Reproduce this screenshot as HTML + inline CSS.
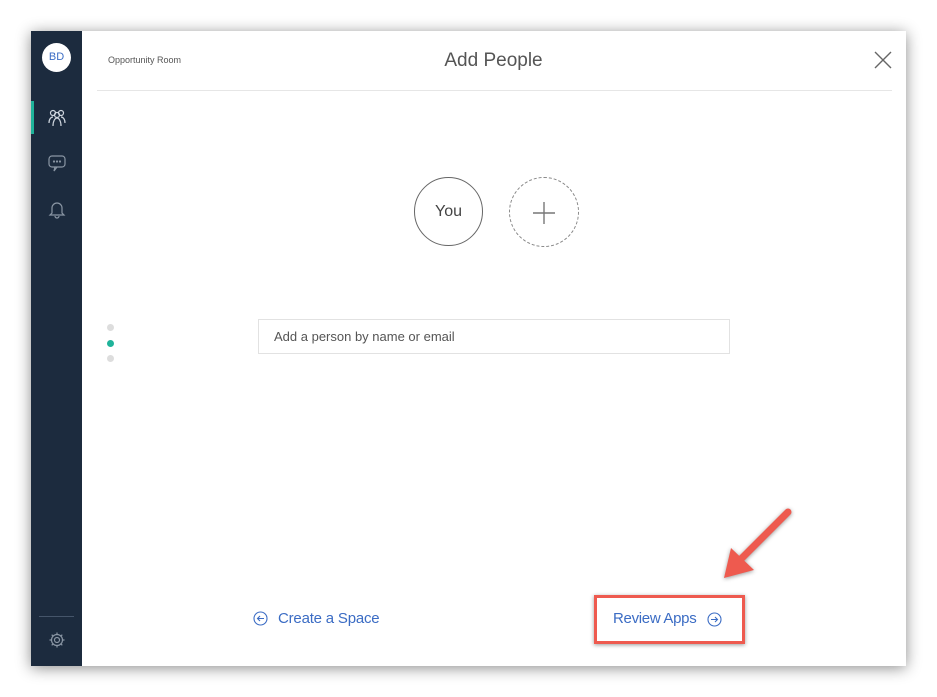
<!DOCTYPE html>
<html><head><style>
body{margin:0;width:937px;height:697px;background:#fff;position:relative;overflow:hidden;font-family:"Liberation Sans",sans-serif}
.win{position:absolute;left:31px;top:31px;width:875px;height:635px;background:#fff;box-shadow:0 2px 14px rgba(0,0,0,.45)}
.side{position:absolute;left:0;top:0;width:51px;height:635px;background:#1c2b3e}
.abs{position:absolute}
</style></head><body>
<div class="win">
 <div class="side">
  <div class="abs" style="left:11px;top:12px;width:29px;height:29px;border-radius:50%;background:#fff;color:#3b6cc4;font-size:11px;text-align:center;line-height:29px">BD</div>
  <div class="abs" style="left:0;top:70px;width:3px;height:33px;background:#1fb39a"></div>
  <svg class="abs" style="left:15px;top:76px" width="22" height="22" viewBox="0 0 22 22" fill="none" stroke="#cfd6de" stroke-width="1.2"><circle cx="7" cy="6" r="2.5"/><circle cx="15" cy="6" r="2.5"/><circle cx="11" cy="8" r="2.5"/><path d="M3 16c0-4 2-6 4-6M19 16c0-4-2-6-4-6M7 19c0-5 2-8 4-8s4 3 4 8"/></svg>
  <svg class="abs" style="left:16px;top:122px" width="20" height="20" viewBox="0 0 20 20" fill="none" stroke="#8a96a4" stroke-width="1.2"><rect x="2" y="3" width="16" height="11" rx="3"/><path d="M8 14l-1 4 3-4"/><circle cx="7" cy="8.5" r=".5"/><circle cx="10" cy="8.5" r=".5"/><circle cx="13" cy="8.5" r=".5"/></svg>
  <svg class="abs" style="left:16px;top:168px" width="20" height="20" viewBox="0 0 20 20" fill="none" stroke="#8a96a4" stroke-width="1.2"><path d="M5 14V9a5 5 0 0110 0v5l2 2H3z"/><path d="M8 17a2 2 0 004 0"/></svg>
  <div class="abs" style="left:8px;top:585px;width:35px;height:1px;background:#45556a"></div>
  <svg class="abs" style="left:17px;top:600px" width="18" height="18" viewBox="0 0 18 18" fill="none" stroke="#8a96a4" stroke-width="1.2"><circle cx="9" cy="9" r="2.5"/><path d="M9 1.5v2.5M9 14v2.5M1.5 9h2.5M14 9h2.5M3.7 3.7l1.8 1.8M12.5 12.5l1.8 1.8M3.7 14.3l1.8-1.8M12.5 5.5l1.8-1.8"/><circle cx="9" cy="9" r="5.5"/></svg>
 </div>
 <div class="abs" style="left:77px;top:24px;font-size:9px;color:#555">Opportunity Room</div>
 <div class="abs" style="left:380px;top:19px;width:165px;text-align:center;font-size:19px;color:#555">Add People</div>
 <svg class="abs" style="left:843px;top:20px" width="18" height="18" stroke="#666" stroke-width="1.4"><path d="M1 1l16 16M17 1L1 17"/></svg>
 <div class="abs" style="left:66px;top:59px;width:795px;height:1px;background:#e6e6e6"></div>
 <div class="abs" style="left:383px;top:146px;width:67px;height:67px;border:1.5px solid #666;border-radius:50%;text-align:center;line-height:67px;font-size:16px;color:#444">You</div>
 <div class="abs" style="left:478px;top:146px;width:68px;height:68px;border:1.5px dashed #888;border-radius:50%"></div>
 <svg class="abs" style="left:501px;top:170px" width="24" height="24" stroke="#777" stroke-width="1.4"><path d="M12 1v22M1 12h22"/></svg>
 <div class="abs" style="left:76px;top:293px;width:7px;height:7px;border-radius:50%;background:#ddd"></div>
 <div class="abs" style="left:76px;top:309px;width:7px;height:7px;border-radius:50%;background:#1fb39a"></div>
 <div class="abs" style="left:76px;top:324px;width:7px;height:7px;border-radius:50%;background:#ddd"></div>
 <div class="abs" style="left:227px;top:288px;width:472px;height:35px;border:1px solid #e2e2e2;box-sizing:border-box;padding-left:15px;line-height:33px;font-size:13px;color:#555">Add a person by name or email</div>
 <svg class="abs" style="left:222px;top:580px" width="15" height="15" fill="none" stroke="#3b6cc4" stroke-width="1.1"><circle cx="7.5" cy="7.5" r="6.5"/><path d="M11 7.5H4.5M7 5l-2.5 2.5L7 10"/></svg>
 <div class="abs" style="left:247px;top:579px;font-size:15px;color:#3b6cc4;letter-spacing:-.2px">Create a Space</div>
 <div class="abs" style="left:563px;top:564px;width:145px;height:43px;border:3px solid #ee5a4f;box-shadow:0 1px 4px rgba(0,0,0,.4)"></div>
 <div class="abs" style="left:582px;top:579px;font-size:15px;color:#3b6cc4;letter-spacing:-.3px">Review Apps</div>
 <svg class="abs" style="left:676px;top:581px" width="15" height="15" fill="none" stroke="#3b6cc4" stroke-width="1.1"><circle cx="7.5" cy="7.5" r="6.5"/><path d="M4 7.5h6.5M8 5l2.5 2.5L8 10"/></svg>
</div>
<svg class="abs" style="left:0;top:0" width="937" height="697"><g style="filter:drop-shadow(0 1px 2px rgba(0,0,0,.4))"><path d="M788 512L738 562" stroke="#ee5a4f" stroke-width="7" stroke-linecap="round"/><path d="M724 578L731 548L754 570Z" fill="#ee5a4f"/></g></svg>
</body></html>
